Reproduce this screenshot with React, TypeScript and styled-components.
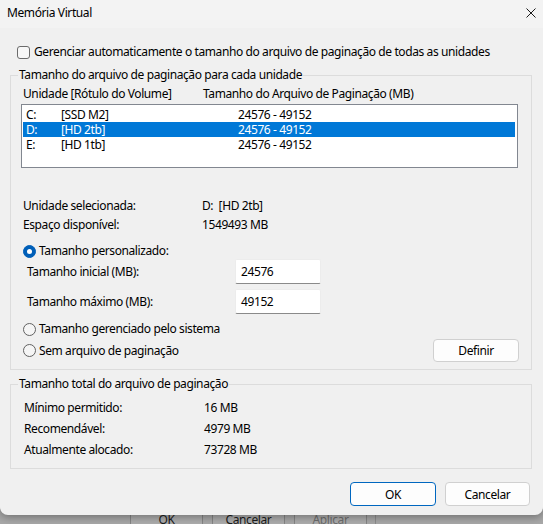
import styled, { createGlobalStyle } from "styled-components";

const GlobalStyle = createGlobalStyle`
  html, body {
    margin: 0;
    padding: 0;
    background: #a8a8a8;
  }
  body {
    font-family: "Noto Sans", "Open Sans", sans-serif;
    font-size: 12px;
    letter-spacing: -0.4px;
    color: #000000;
  }
  * {
    box-sizing: border-box;
  }
`;

const Screen = styled.div`
  width: 543px;
  height: 524px;
  overflow: hidden;
  display: flex;
  flex-direction: column;
`;

const Dialog = styled.div`
  position: relative;
  z-index: 1;
  flex-shrink: 0;
  height: 515px;
  display: flex;
  flex-direction: column;
  background: #f0f0f0;
  border-radius: 0 0 8px 8px;
  box-shadow: 0 2px 8px rgba(0, 0, 0, 0.35);
`;

const TitleBar = styled.div`
  height: 28px;
  display: flex;
  align-items: center;
  justify-content: space-between;
  padding: 0 4px 2px 7px;
  background: #f3f3f3;
`;

const Title = styled.span`
  line-height: 16px;
`;

const CloseButton = styled.button`
  width: 16px;
  height: 16px;
  padding: 0;
  display: flex;
  align-items: center;
  justify-content: center;
  border: none;
  background: transparent;
`;

const Body = styled.div`
  display: flex;
  flex-direction: column;
  padding: 0 11px 0 10px;
`;

const CheckRow = styled.label`
  display: flex;
  align-items: center;
  gap: 4px;
  height: 16px;
  margin: 16px 0 0 7px;
  line-height: 16px;
`;

const CheckBox = styled.span`
  width: 13px;
  height: 13px;
  border: 1px solid #6b6b6b;
  border-radius: 3px;
  background: #f7f7f7;
`;

const Group = styled.fieldset<{ $top: number }>`
  margin: ${(p) => p.$top}px 0 0;
  padding: 0;
  border: 1px solid #dcdcdc;
  min-width: 0;
  display: flex;
  flex-direction: column;
`;

const Legend = styled.legend`
  margin-left: 7px;
  padding: 0 1px;
  line-height: 16px;
`;

const ColumnHeader = styled.div`
  display: grid;
  grid-template-columns: 180px 1fr;
  height: 14px;
  line-height: 14px;
  margin: 4px 0 3px 12px;
`;

const ListBox = styled.div`
  margin-left: 10px;
  width: 497px;
  height: 64px;
  padding: 1px;
  border: 1px solid #828790;
  background: #ffffff;
`;

const DriveRow = styled.div<{ $selected?: boolean }>`
  display: grid;
  grid-template-columns: 35px 177px 1fr;
  height: 15px;
  line-height: 15px;
  padding-left: 3px;
  margin-right: 1px;
  overflow: hidden;
  background: ${(p) => (p.$selected ? "#0078d7" : "transparent")};
  color: ${(p) => (p.$selected ? "#ffffff" : "#000000")};
  &:first-child {
    margin-top: 1px;
  }
`;

const InfoGrid = styled.div<{ $top: number; $left: number; $col: number; $gap: number }>`
  display: grid;
  grid-template-columns: ${(p) => p.$col}px 1fr;
  row-gap: ${(p) => p.$gap}px;
  margin: ${(p) => p.$top}px 0 0 ${(p) => p.$left}px;
  line-height: 16px;
`;

const RadioRow = styled.label<{ $top: number }>`
  display: flex;
  align-items: center;
  gap: 3px;
  height: 16px;
  line-height: 16px;
  margin: ${(p) => p.$top}px 0 0 12px;
`;

const Radio = styled.span<{ $checked?: boolean }>`
  width: 13px;
  height: 13px;
  border-radius: 50%;
  display: flex;
  align-items: center;
  justify-content: center;
  background: ${(p) => (p.$checked ? "#005fb8" : "#f5f5f5")};
  border: 1px solid ${(p) => (p.$checked ? "#005fb8" : "#616161")};
  &::after {
    content: "";
    display: ${(p) => (p.$checked ? "block" : "none")};
    width: 5px;
    height: 5px;
    border-radius: 50%;
    background: #ffffff;
  }
`;

const FieldRow = styled.div<{ $top: number }>`
  display: grid;
  grid-template-columns: 208px 86px;
  align-items: center;
  margin: ${(p) => p.$top}px 0 0 16px;
`;

const TextBox = styled.div`
  height: 25px;
  padding: 4px 0 0 5px;
  line-height: 16px;
  background: #ffffff;
  border: 1px solid #ececec;
  border-bottom-color: #8a8a8a;
  border-radius: 2px;
`;

const ActionRow = styled.div`
  display: flex;
  align-items: center;
  justify-content: space-between;
  height: 23px;
  margin: 2px 12px 7px 0;
`;

const Button = styled.button<{ $default?: boolean; $w: number; $h: number }>`
  width: ${(p) => p.$w}px;
  height: ${(p) => p.$h}px;
  padding: 0;
  font: inherit;
  letter-spacing: inherit;
  color: #000000;
  background: #fdfdfd;
  border: 1px solid ${(p) => (p.$default ? "#0067c0" : "#d0d0d0")};
  border-radius: 4px;
`;

const Footer = styled.div`
  display: flex;
  justify-content: flex-end;
  gap: 9px;
  margin: 13px 2px 0 0;
`;

const Spacer = styled.div<{ $h: number }>`
  height: ${(p) => p.$h}px;
`;

const ParentBar = styled.div`
  display: flex;
  gap: 9px;
  height: 23px;
  margin-top: -7px;
  padding-left: 130px;
`;

const ParentButton = styled.div<{ $disabled?: boolean }>`
  width: 73px;
  height: 23px;
  line-height: 21px;
  text-align: center;
  border: 1px solid #858585;
  background: #adadad;
  color: ${(p) => (p.$disabled ? "#6e6e6e" : "#1b1b1b")};
`;

const ParentEdge = styled.div`
  width: 1px;
  margin-left: -1px;
  background: #8c8c8c;
`;

const drives = [
  { letter: "C:", label: "[SSD M2]", size: "24576 - 49152" },
  { letter: "D:", label: "[HD 2tb]", size: "24576 - 49152", selected: true },
  { letter: "E:", label: "[HD 1tb]", size: "24576 - 49152" },
];

const App = () => (
  <Screen>
    <GlobalStyle />
    <Dialog>
      <TitleBar>
        <Title>Memória Virtual</Title>
        <CloseButton aria-label="Fechar">
          <svg width="10" height="10" viewBox="0 0 10 10">
            <path d="M0.5 0.5 L9.5 9.5 M9.5 0.5 L0.5 9.5" stroke="#1a1a1a" strokeWidth="1" />
          </svg>
        </CloseButton>
      </TitleBar>
      <Body>
        <CheckRow>
          <CheckBox />
          Gerenciar automaticamente o tamanho do arquivo de paginação de todas as unidades
        </CheckRow>

        <Group $top={7}>
          <Legend>Tamanho do arquivo de paginação para cada unidade</Legend>
          <ColumnHeader>
            <span>Unidade [Rótulo do Volume]</span>
            <span>Tamanho do Arquivo de Paginação (MB)</span>
          </ColumnHeader>
          <ListBox>
            {drives.map((d) => (
              <DriveRow key={d.letter} $selected={d.selected}>
                <span>{d.letter}</span>
                <span>{d.label}</span>
                <span>{d.size}</span>
              </DriveRow>
            ))}
          </ListBox>

          <InfoGrid $top={30} $left={12} $col={179} $gap={3}>
            <span>Unidade selecionada:</span>
            <span>D:&nbsp;&nbsp;[HD 2tb]</span>
            <span>Espaço disponível:</span>
            <span>1549493 MB</span>
          </InfoGrid>

          <RadioRow $top={10}>
            <Radio $checked />
            Tamanho personalizado:
          </RadioRow>
          <FieldRow $top={0}>
            <span>Tamanho inicial (MB):</span>
            <TextBox>24576</TextBox>
          </FieldRow>
          <FieldRow $top={5}>
            <span>Tamanho máximo (MB):</span>
            <TextBox>49152</TextBox>
          </FieldRow>
          <RadioRow $top={7}>
            <Radio />
            Tamanho gerenciado pelo sistema
          </RadioRow>
          <ActionRow>
            <RadioRow $top={0}>
              <Radio />
              Sem arquivo de paginação
            </RadioRow>
            <Button $w={86} $h={23}>Definir</Button>
          </ActionRow>
        </Group>

        <Group $top={6}>
          <Legend>Tamanho total do arquivo de paginação</Legend>
          <InfoGrid $top={8} $left={13} $col={180} $gap={5}>
            <span>Mínimo permitido:</span>
            <span>16 MB</span>
            <span>Recomendável:</span>
            <span>4979 MB</span>
            <span>Atualmente alocado:</span>
            <span>73728 MB</span>
          </InfoGrid>
          <Spacer $h={10} />
        </Group>

        <Footer>
          <Button $default $w={86} $h={24}>OK</Button>
          <Button $w={85} $h={24}>Cancelar</Button>
        </Footer>
      </Body>
    </Dialog>
    <ParentBar>
      <ParentButton>OK</ParentButton>
      <ParentButton>Cancelar</ParentButton>
      <ParentButton $disabled>Aplicar</ParentButton>
      <ParentEdge />
    </ParentBar>
  </Screen>
);

export default App;
